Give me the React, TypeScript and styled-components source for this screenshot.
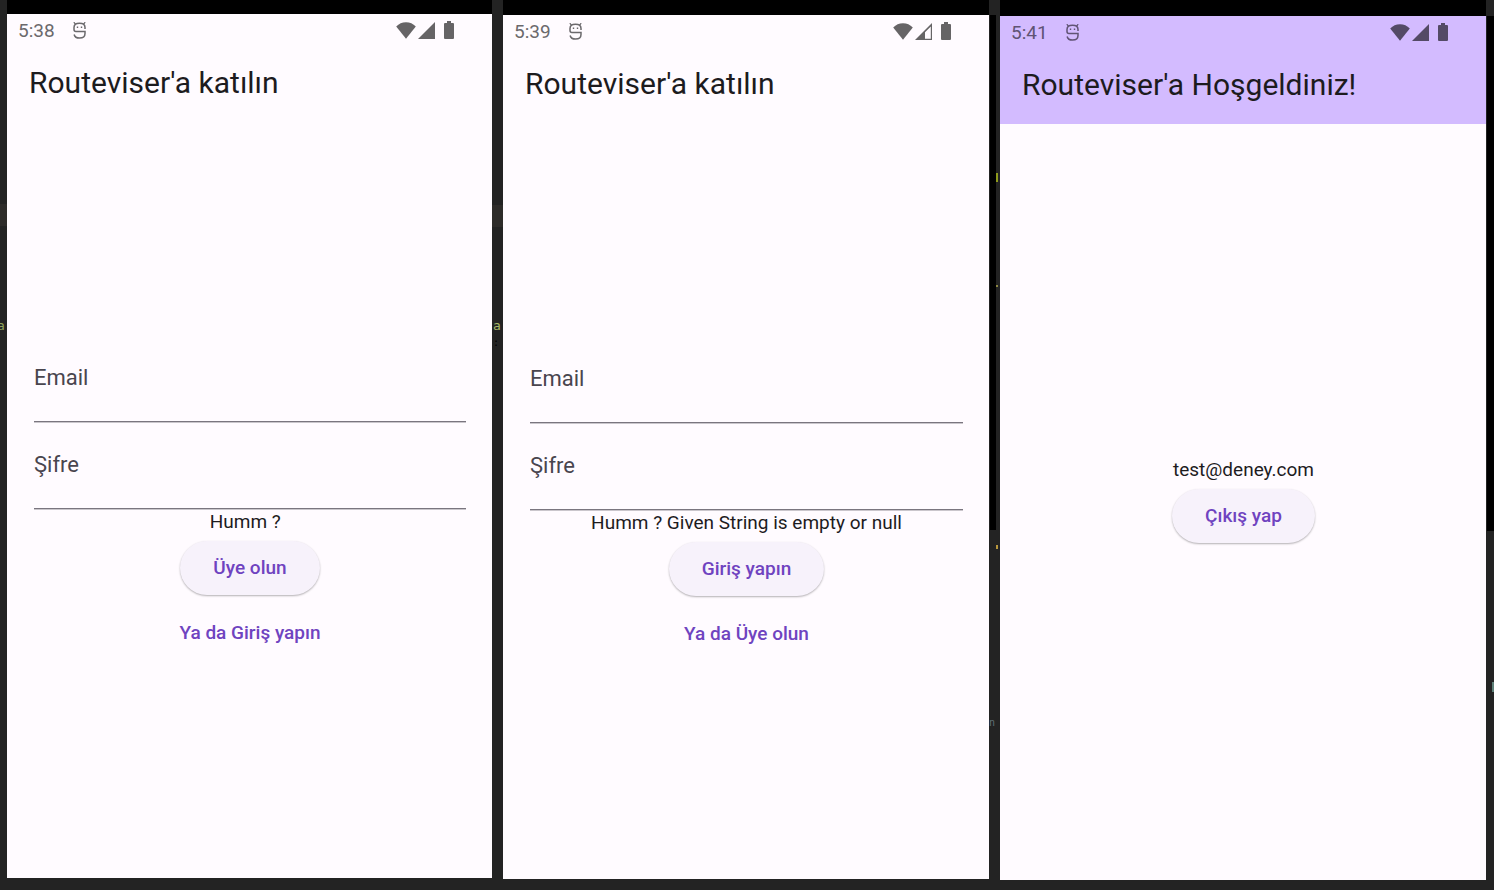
import React from "react";
import styled, { createGlobalStyle } from "styled-components";

const GlobalStyle = createGlobalStyle`
  * { box-sizing: border-box; }
  body {
    margin: 0;
    background: #232323;
    font-family: Roboto, "Noto Sans", sans-serif;
    color: #1d1b1e;
  }
`;

const Page = styled.main`
  display: grid;
  grid-template-columns: 7px 485fr 11px 486fr 11px 486fr 8px;
  min-height: 100vh;
`;

const Gutter = styled.div<{ $background?: string }>`
  display: flex;
  flex-direction: column;
  overflow: hidden;
  background: ${(p) => p.$background ?? "#232323"};
`;

const LineHighlight = styled.div<{ $top: number }>`
  height: 22px;
  margin-top: ${(p) => p.$top}px;
  background: #2d2b29;
`;

const CodeText = styled.span<{ $top: number; $color: string; $start?: number; $size?: number }>`
  margin-top: ${(p) => p.$top}px;
  margin-left: ${(p) => p.$start ?? 0}px;
  font: ${(p) => p.$size ?? 13}px/16px "DejaVu Sans Mono", monospace;
  color: ${(p) => p.$color};
  white-space: pre;
`;

const CodeMark = styled.div<{ $top: number; $start: number; $height: number; $color: string }>`
  flex: none;
  width: 2px;
  height: ${(p) => p.$height}px;
  margin-top: ${(p) => p.$top}px;
  margin-left: ${(p) => p.$start}px;
  background: ${(p) => p.$color};
`;

const Slot = styled.div<{ $top: number; $bottom: number }>`
  display: flex;
  padding: ${(p) => p.$top}px 0 ${(p) => p.$bottom}px;
  background: linear-gradient(#000 0 50%, #232323 50% 100%);
`;

const Screen = styled.section`
  flex: 1;
  min-width: 0;
  display: flex;
  flex-direction: column;
  background: #fffbff;
`;

const Header = styled.header<{ $filled?: boolean }>`
  background: ${(p) => (p.$filled ? "#d3bbff" : "transparent")};
`;

const StatusBar = styled.div<{ $filled?: boolean }>`
  display: flex;
  align-items: center;
  height: 32px;
  padding: 2px 38px 0 11px;
  font-size: 19px;
  line-height: 22px;
  color: ${(p) => (p.$filled ? "#605374" : "#6b696c")};
`;

const StatusIcons = styled.div<{ $filled?: boolean }>`
  display: flex;
  align-items: center;
  margin-left: auto;
  padding-bottom: 2px;
  color: ${(p) => (p.$filled ? "#544a66" : "#666466")};
  svg { display: block; }
  svg + svg { margin-left: 2px; }
  svg:last-child { margin-left: 9px; }
`;

const DebugIcon = styled.svg`
  margin: 0 0 2px 18px;
`;

const Title = styled.h1`
  margin: 0;
  padding: 0 22px 2px;
  font-size: 30px;
  font-weight: 400;
  line-height: 74px;
`;

const Content = styled.form`
  flex: 1;
  display: flex;
  flex-direction: column;
  align-items: center;
  justify-content: center;
  padding: 0 26px 0 27px;
`;

const Field = styled.label`
  display: flex;
  flex-direction: column;
  width: 100%;
  height: 87px;
  padding-top: 29px;
  font-size: 22px;
  line-height: 28px;
  color: #49454e;
`;

const FieldInput = styled.input`
  width: 100%;
  height: 30px;
  padding: 0;
  border: 0;
  border-bottom: 1px solid #7a757f;
  box-shadow: 0 1px #cac6cc;
  border-radius: 0;
  outline: 0;
  background: transparent;
  font: inherit;
`;

const Message = styled.p`
  margin: 0;
  font-size: 19px;
  line-height: 26px;
  white-space: pre;
`;

const ButtonBase = styled.button`
  border: 0;
  border-radius: 27px;
  font: 500 19px/26px Roboto, "Noto Sans", sans-serif;
  color: #6f43c0;
  cursor: pointer;
`;

const ElevatedButton = styled(ButtonBase)`
  height: 54px;
  margin: 6px 0 5px;
  padding: 0 33px;
  background: #f7f2fb;
  box-shadow: 0 1px 2px rgba(0, 0, 0, 0.3);
`;

const TextButton = styled(ButtonBase)`
  height: 65px;
  padding: 0 16px;
  background: transparent;
`;

const Debug = () => (
  <DebugIcon width="13" height="17" viewBox="0 0 13 17" fill="none" stroke="currentColor" aria-hidden="true">
    <path d="M.8 .2 2.6 2.400M12.200 .2 10.400 2.400" strokeWidth="1.3" />
    <path
      d="M12 7V5.500Q12 1.300 6.500 1.300T1 5.500v2q0 2 2 2H12v2q0 4.600-5.500 4.600-4.500 0-5.400-3.600"
      strokeWidth="1.5"
    />
    <path d="M3.800 5.200h1.400M7.800 5.200h1.400" strokeWidth="1.4" />
  </DebugIcon>
);

const Wifi = () => (
  <svg width="20" height="17" viewBox="0 0 20 17" fill="currentColor" aria-hidden="true">
    <path d="M10 16.800 .2 4.600Q4.200 .2 10 .2T19.800 4.600Z" />
  </svg>
);

const Signal = ({ weak }: { weak?: boolean }) => (
  <svg width="17" height="17" viewBox="0 0 17 17" fill="currentColor" aria-hidden="true">
    {weak ? (
      <path fillRule="evenodd" d="M0 17 17 0v17ZM10 15.800h5.800V3.500L10 9.300Z" />
    ) : (
      <path d="M0 17 17 0v17Z" />
    )}
  </svg>
);

const Battery = () => (
  <svg width="10" height="18" viewBox="0 0 10 18" fill="currentColor" aria-hidden="true">
    <path d="M3 0h4v2h2q1 0 1 1v14q0 1-1 1H1q-1 0-1-1V3q0-1 1-1h2Z" />
  </svg>
);

type PhoneProps = {
  time: string;
  title: string;
  top: number;
  bottom: number;
  filled?: boolean;
  weakSignal?: boolean;
  children: React.ReactNode;
};

const Phone = ({ time, title, top, bottom, filled, weakSignal, children }: PhoneProps) => (
  <Slot $top={top} $bottom={bottom}>
    <Screen>
      <Header $filled={filled}>
        <StatusBar $filled={filled}>
          <span>{time}</span>
          <Debug />
          <StatusIcons $filled={filled}>
            <Wifi />
            <Signal weak={weakSignal} />
            <Battery />
          </StatusIcons>
        </StatusBar>
        <Title>{title}</Title>
      </Header>
      <Content onSubmit={(e) => e.preventDefault()}>{children}</Content>
    </Screen>
  </Slot>
);

type AuthProps = { message: string; action: string; alternative: string };

const AuthForm = ({ message, action, alternative }: AuthProps) => (
  <>
    <Field>
      Email
      <FieldInput type="email" />
    </Field>
    <Field>
      Şifre
      <FieldInput type="password" />
    </Field>
    <Message>{message}</Message>
    <ElevatedButton type="submit">{action}</ElevatedButton>
    <TextButton type="button">{alternative}</TextButton>
  </>
);

export default function App() {
  return (
    <>
      <GlobalStyle />
      <Page lang="tr">
        <Gutter aria-hidden="true">
          <LineHighlight $top={204} />
          <CodeText $top={92} $start={-3} $color="#8fa05c">a</CodeText>
        </Gutter>
        <Phone time="5:38" title="Routeviser'a katılın" top={14} bottom={12}>
          <AuthForm message="Humm ?  " action="Üye olun" alternative="Ya da Giriş yapın" />
        </Phone>
        <Gutter aria-hidden="true">
          <LineHighlight $top={205} />
          <CodeText $top={91} $start={1} $color="#a3b565">a</CodeText>
          <CodeText $top={1} $start={1} $size={10} $color="#000">:</CodeText>
        </Gutter>
        <Phone time="5:39" title="Routeviser'a katılın" top={15} bottom={11} weakSignal>
          <AuthForm
            message="Humm ? Given String is empty or null"
            action="Giriş yapın"
            alternative="Ya da Üye olun"
          />
        </Phone>
        <Gutter
          aria-hidden="true"
          $background="linear-gradient(#000, #000) 1px 15px / 6px 515px no-repeat #232323"
        >
          <CodeMark $top={173} $start={7} $height={9} $color="#8e9a1c" />
          <CodeMark $top={103} $start={7} $height={2} $color="#8b8640" />
          <CodeMark $top={258} $start={7} $height={4} $color="#b8973c" />
          <CodeText $top={166} $start={0} $size={10} $color="#5f7076">n</CodeText>
        </Gutter>
        <Phone time="5:41" title="Routeviser'a Hoşgeldiniz!" top={16} bottom={10} filled>
          <Message>test@deney.com</Message>
          <ElevatedButton type="submit">Çıkış yap</ElevatedButton>
        </Phone>
        <Gutter
          aria-hidden="true"
          $background="linear-gradient(#000, #000) 1px 16px / 7px 515px no-repeat #232323"
        >
          <CodeMark $top={682} $start={6} $height={10} $color="#5d8078" />
        </Gutter>
      </Page>
    </>
  );
}
